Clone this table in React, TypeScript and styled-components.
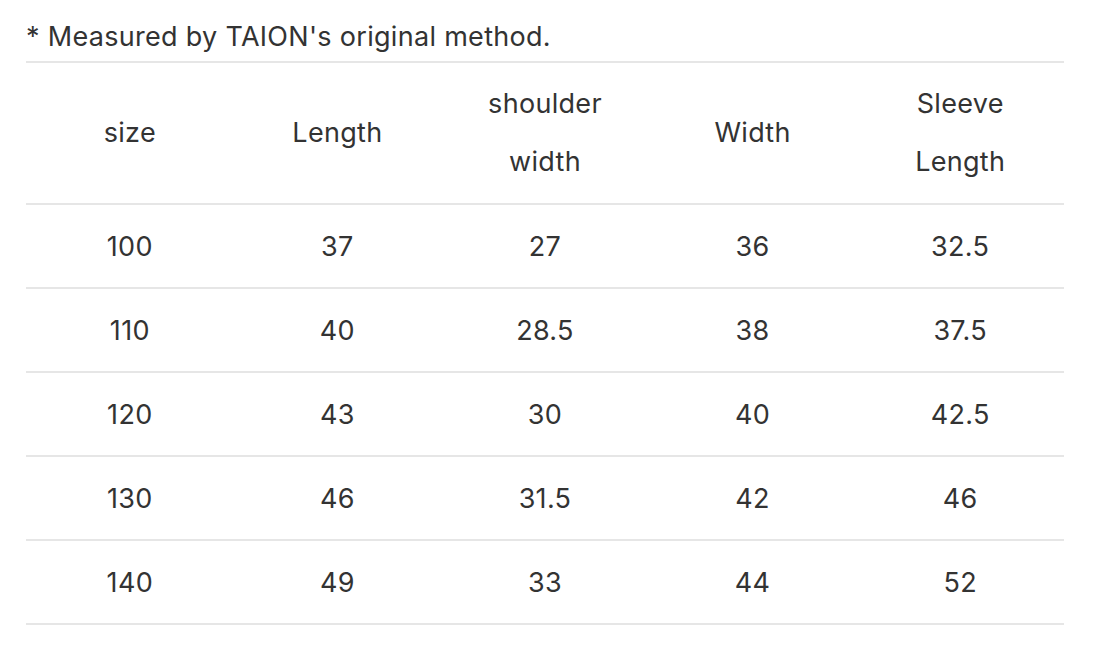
import React from 'react';
import styled, { createGlobalStyle } from 'styled-components'

const GlobalStyle = createGlobalStyle`
  html, body {
    margin: 0;
    padding: 0;
    background: #fff;
  }
  body {
    font-family: Inter, "Noto Sans", sans-serif;
    color: #333;
  }
`

const Page = styled.div`
  width: 1038px;
  padding: 17px 32px 0 26px;
`

const Note = styled.p`
  margin: 0 0 4px;
  font-size: 27px;
  line-height: 40px;
  letter-spacing: 0.3px;
  white-space: nowrap;
`

const Table = styled.table`
  width: 100%;
  border-collapse: collapse;
  table-layout: fixed;
  border-top: 2px solid #e6e6e6;
`

const Row = styled.tr`
  border-bottom: 2px solid #e6e6e6;
`

const Cell = styled.td<{ $head?: boolean }>`
  padding: ${p => (p.$head ? '12px 0' : '13px 0 11px')};
  text-align: center;
  vertical-align: middle;
  font-size: 27px;
  font-weight: 400;
  line-height: 58px;
  letter-spacing: 0.3px;
  color: #333;
`

const HEADERS = [['size'], ['Length'], ['shoulder', 'width'], ['Width'], ['Sleeve', 'Length']]

const ROWS = [
  ['100', '37', '27', '36', '32.5'],
  ['110', '40', '28.5', '38', '37.5'],
  ['120', '43', '30', '40', '42.5'],
  ['130', '46', '31.5', '42', '46'],
  ['140', '49', '33', '44', '52'],
]

function App() {
  return (
    <Page>
      <GlobalStyle />
      <Note>* Measured by TAION's original method.</Note>
      <Table>
        <thead>
          <Row>
            {HEADERS.map((h, i) => (
              <Cell as="th" $head key={i}>
                {h.map((line, j) => <div key={j}>{line}</div>)}
              </Cell>
            ))}
          </Row>
        </thead>
        <tbody>
          {ROWS.map((r, i) => (
            <Row key={i}>
              {r.map((c, j) => <Cell key={j}>{c}</Cell>)}
            </Row>
          ))}
        </tbody>
      </Table>
    </Page>
  );
}

export default App;
